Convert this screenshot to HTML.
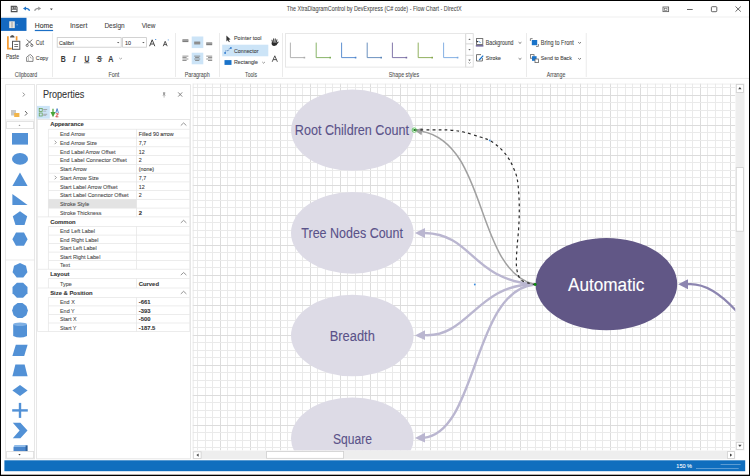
<!DOCTYPE html>
<html><head><meta charset="utf-8"><style>
html,body{margin:0;padding:0;}
body{width:750px;height:476px;position:relative;overflow:hidden;background:#fff;font-family:"Liberation Sans",sans-serif;}
.t{position:absolute;white-space:nowrap;line-height:1;transform-origin:0 0;}
.a{position:absolute;}
svg{position:absolute;left:0;top:0;}
</style></head><body>
<svg width="750" height="476" viewBox="0 0 750 476"><rect x="0" y="0" width="750" height="476" fill="#000"/><rect x="1" y="1" width="748" height="473.7" fill="#fff"/><rect x="1" y="16.6" width="748" height="0.8" fill="#ececec"/><path d="M11.3,6.4 L16.2,6.4 L17,7.2 L17,11.6 L11.3,11.6 Z" fill="#fff" stroke="#505050" stroke-width="1.1"/><rect x="12.4" y="9.9" width="3.6" height="1.1" fill="#fff"/><rect x="12.5" y="6.6" width="3.4" height="2.4" fill="#6a6a6a"/><rect x="14.4" y="6.9" width="0.8" height="1.6" fill="#ccc"/><rect x="11.8" y="9.2" width="4.8" height="0.7" fill="#505050"/><path d="M23,8.6 L26,6.6 L26,10.4 Z" fill="#1e73c8"/><path d="M25.5,8.4 Q28.5,8.2 29.6,10.8" fill="none" stroke="#1e73c8" stroke-width="1.3"/><path d="M41.2,8.6 L38.2,6.6 L38.2,10.4 Z" fill="#9a9a9a"/><path d="M38.7,8.4 Q35.7,8.2 34.6,10.8" fill="none" stroke="#9a9a9a" stroke-width="1.3"/><path d="M50,8.6 L52.8,8.6 L51.4,10.2 Z" fill="#444"/><rect x="663" y="7" width="5.6" height="4.6" fill="none" stroke="#666" stroke-width="0.9"/><rect x="664.6" y="8.3" width="2.4" height="2" fill="none" stroke="#666" stroke-width="0.6"/><rect x="687" y="9" width="5.7" height="0.9" fill="#555"/><rect x="711.4" y="6.7" width="5.4" height="5" rx="0.8" fill="none" stroke="#555" stroke-width="0.9"/><path d="M735.5,6.5 L740.8,11.6 M740.8,6.5 L735.5,11.6" stroke="#555" stroke-width="0.9"/><rect x="1" y="17.8" width="25.5" height="13.1" fill="#1469c1"/><rect x="9.2" y="21.3" width="5.6" height="6.8" fill="#e8e6e0"/><rect x="11.4" y="21.8" width="1.2" height="5.8" fill="#aaa"/><rect x="16.6" y="24.3" width="1" height="1" fill="#9bb8db"/><rect x="34.8" y="29.9" width="18.3" height="1.2" fill="#1b6fc6"/><rect x="1" y="77.9" width="748" height="0.9" fill="#e4e4e4"/><rect x="52.10" y="33" width="0.8" height="44" fill="#e6e6e6"/><rect x="175.10" y="33" width="0.8" height="44" fill="#e6e6e6"/><rect x="219.20" y="33" width="0.8" height="44" fill="#e6e6e6"/><rect x="282.00" y="33" width="0.8" height="44" fill="#e6e6e6"/><rect x="526.10" y="33" width="0.8" height="44" fill="#e6e6e6"/><rect x="585.80" y="33" width="0.8" height="44" fill="#e6e6e6"/><path d="M7.9,36.2 L7.9,48.6 L11.8,48.6" fill="none" stroke="#f59a30" stroke-width="1.7"/><path d="M16.6,36.2 L16.6,40.6" fill="none" stroke="#f59a30" stroke-width="1.7"/><path d="M10.0,37.4 Q10.2,35.8 11.4,35.6 Q12.2,34.6 13.2,35.6 Q14.4,35.8 14.6,37.4 Z" fill="#505050"/><rect x="12.5" y="41.3" width="7.3" height="8" fill="#fff" stroke="#555" stroke-width="1"/><rect x="14.3" y="44" width="3.8" height="0.8" fill="#555"/><rect x="14.3" y="46" width="3.8" height="0.8" fill="#555"/><path d="M26.6,39.6 L32.4,44.6 M32.4,39.6 L26.6,44.6" stroke="#555" stroke-width="0.8"/><circle cx="27.2" cy="45.4" r="1.1" fill="none" stroke="#555" stroke-width="0.8"/><circle cx="31.8" cy="45.4" r="1.1" fill="none" stroke="#555" stroke-width="0.8"/><path d="M26.6,57.2 L28.6,55.6 L28.6,61.4 L26.6,61.4 Z" fill="#fff" stroke="#555" stroke-width="0.7"/><path d="M28.4,55.4 L30.6,54.6 L33,57 L33,61.4 L28.6,61.4" fill="#fff" stroke="#555" stroke-width="0.7"/><path d="M30.2,56.6 L31.2,58.4" stroke="#555" stroke-width="0.6"/><rect x="57.2" y="37.6" width="64" height="9.6" fill="#fff" stroke="#c8c8c8" stroke-width="0.8"/><rect x="122.6" y="37.6" width="23.8" height="9.6" fill="#fff" stroke="#c8c8c8" stroke-width="0.8"/><path d="M117,42.1 L119.4,42.1 L118.2,43.3 Z" fill="#555"/><path d="M142.2,42.1 L144.6,42.1 L143.4,43.3 Z" fill="#555"/><path d="M149.6,46.2 L152.2,39.8 L154.8,46.2 M150.7,44 L153.7,44" fill="none" stroke="#444" stroke-width="1"/><rect x="155.2" y="39" width="1" height="1" fill="#3b86d6"/><path d="M163.2,46.2 L165.2,41.3 L167.2,46.2 M164,44.6 L166.4,44.6" fill="none" stroke="#444" stroke-width="0.9"/><rect x="167.8" y="39.5" width="0.9" height="0.9" fill="#3b86d6"/><rect x="191.7" y="36.5" width="11.6" height="11.6" fill="#cce4f7"/><rect x="191.7" y="52.7" width="11.6" height="11.6" fill="#cce4f7"/><rect x="182.4" y="39.3" width="6" height="2.8" fill="#7d7d7d"/><rect x="182.4" y="40.5" width="6" height="0.45" fill="#c8c8c8"/><rect x="194.2" y="41.6" width="6" height="2.8" fill="#7d7d7d"/><rect x="194.2" y="42.8" width="6" height="0.45" fill="#c8c8c8"/><rect x="206.2" y="42.4" width="6" height="2.8" fill="#7d7d7d"/><rect x="206.2" y="43.6" width="6" height="0.45" fill="#c8c8c8"/><rect x="182.4" y="55.70" width="6" height="0.8" fill="#7a7a7a"/><rect x="194.20" y="55.70" width="6" height="0.8" fill="#7a7a7a"/><rect x="206.20" y="55.70" width="6" height="0.8" fill="#7a7a7a"/><rect x="182.4" y="57.15" width="4.2" height="0.8" fill="#7a7a7a"/><rect x="195.10" y="57.15" width="4.2" height="0.8" fill="#7a7a7a"/><rect x="208.00" y="57.15" width="4.2" height="0.8" fill="#7a7a7a"/><rect x="182.4" y="58.60" width="6" height="0.8" fill="#7a7a7a"/><rect x="194.20" y="58.60" width="6" height="0.8" fill="#7a7a7a"/><rect x="206.20" y="58.60" width="6" height="0.8" fill="#7a7a7a"/><rect x="182.4" y="60.05" width="4.2" height="0.8" fill="#7a7a7a"/><rect x="195.10" y="60.05" width="4.2" height="0.8" fill="#7a7a7a"/><rect x="208.00" y="60.05" width="4.2" height="0.8" fill="#7a7a7a"/><rect x="84.2" y="62.4" width="5.2" height="0.8" fill="#555"/><rect x="96.4" y="58.2" width="6" height="0.7" fill="#555"/><path d="M119.2,57.9 L120.6,59.1 L122,57.9" fill="none" stroke="#888" stroke-width="0.7"/><path d="M226.4,35.6 L226.4,41.6 L227.8,40.2 L229,42.2 L229.8,41.8 L228.7,39.8 L230.6,39.6 Z" fill="#333"/><rect x="222.2" y="44.7" width="46.1" height="11.6" fill="#cce4f7"/><path d="M225.2,52.6 L225.6,50.8 L228.6,50.6 L229.2,48.6 L230.6,48.4" fill="none" stroke="#3a6aa8" stroke-width="0.7" stroke-dasharray="1 0.6"/><circle cx="225.1" cy="53.0" r="0.9" fill="#2a78d0"/><circle cx="230.9" cy="48.0" r="0.9" fill="#2a78d0"/><rect x="224.5" y="60.1" width="7" height="4.8" fill="#1a73c9"/><path d="M262.3,62 L263.6,63.2 L264.9,62" fill="none" stroke="#666" stroke-width="0.7"/><path d="M272.6,42.6 L272,40.2 M273.8,41.8 L273.6,38.9 M275.1,41.8 L275.3,38.9 M276.4,42.2 L276.9,39.8" stroke="#2b2b2b" stroke-width="0.95" stroke-linecap="round"/><path d="M271.6,42.4 Q271.2,45.6 274.2,46 Q277,46 277.6,43.6 L278.8,41.9 Q278.2,41.2 277.3,42.2 L276.8,42.6 L272.4,42.2 Z" fill="#2b2b2b"/><path d="M272.2,61.8 L274.8,55.8 L277.4,61.8 M273.2,59.6 L276.4,59.6" fill="none" stroke="#444" stroke-width="0.9"/><rect x="285.4" y="33.6" width="180" height="33.5" fill="#fff" stroke="#e2e2e2" stroke-width="0.8"/><path d="M290.4,42.6 L290.4,57.6 L304.8,57.6" fill="none" stroke="#aaaaaa" stroke-width="0.9"/><rect x="303.6" y="56.8" width="1.6" height="1.6" fill="#aaaaaa"/><path d="M316.2,42.6 L316.2,57.6 L330.6,57.6" fill="none" stroke="#7cac58" stroke-width="0.9"/><rect x="329.4" y="56.8" width="1.6" height="1.6" fill="#7cac58"/><path d="M341.6,42.6 L341.6,57.6 L356.0,57.6" fill="none" stroke="#4d84cc" stroke-width="0.9"/><rect x="354.8" y="56.8" width="1.6" height="1.6" fill="#4d84cc"/><path d="M367.2,42.6 L367.2,57.6 L381.6,57.6" fill="none" stroke="#5b86b8" stroke-width="0.9"/><rect x="380.4" y="56.8" width="1.6" height="1.6" fill="#5b86b8"/><path d="M392.4,42.6 L392.4,57.6 L406.8,57.6" fill="none" stroke="#7468a0" stroke-width="0.9"/><rect x="405.6" y="56.8" width="1.6" height="1.6" fill="#7468a0"/><path d="M418.2,42.6 L418.2,57.6 L432.6,57.6" fill="none" stroke="#86a84e" stroke-width="0.9"/><rect x="431.4" y="56.8" width="1.6" height="1.6" fill="#86a84e"/><path d="M443.6,42.6 L443.6,57.6 L458.0,57.6" fill="none" stroke="#78a8e0" stroke-width="0.9"/><rect x="456.8" y="56.8" width="1.6" height="1.6" fill="#78a8e0"/><rect x="465.8" y="33.6" width="7.4" height="10.4" fill="#fff" stroke="#d6d6d6" stroke-width="0.8"/><rect x="465.8" y="44" width="7.4" height="11.3" fill="#fff" stroke="#d6d6d6" stroke-width="0.8"/><rect x="465.8" y="55.3" width="7.4" height="11.8" fill="#fff" stroke="#d6d6d6" stroke-width="0.8"/><path d="M468.3,40 L470.7,40 L469.5,38.5 Z" fill="#666"/><path d="M468.3,48.9 L470.7,48.9 L469.5,50.4 Z" fill="#666"/><path d="M468.3,59.6 L470.7,59.6 L469.5,61.2 Z" fill="#666"/><path d="M468.3,62.4 L469.5,63.4 L470.7,62.4" fill="none" stroke="#777" stroke-width="0.6"/><rect x="476.5" y="38.6" width="6.3" height="5.8" fill="#fff" stroke="#555" stroke-width="0.8"/><path d="M476,40.4 L478.6,41.6 L477.2,42.4 Z" fill="#222"/><path d="M478.6,41.4 L480.6,42.6" stroke="#3a86d4" stroke-width="0.9"/><rect x="475.8" y="45.2" width="7.6" height="1.3" fill="#564a86"/><path d="M481,54.6 L476.5,54.6 L476.5,61 L482.4,61 L482.4,58" fill="none" stroke="#555" stroke-width="0.8"/><path d="M479.2,60 L483.2,55.6" stroke="#1a73c9" stroke-width="1.2"/><path d="M518.6,42.2 L520.0,43.4 L521.4,42.2" fill="none" stroke="#555" stroke-width="0.8"/><path d="M518.6,58.2 L520.0,59.4 L521.4,58.2" fill="none" stroke="#555" stroke-width="0.8"/><path d="M578.2,42.2 L579.6,43.4 L581.0,42.2" fill="none" stroke="#555" stroke-width="0.8"/><path d="M578.2,58.2 L579.6,59.4 L581.0,58.2" fill="none" stroke="#555" stroke-width="0.8"/><path d="M530.4,41 L530.4,38.6 L532.6,38.6" fill="none" stroke="#666" stroke-width="0.8"/><path d="M538.4,44 L538.4,46.4 L536,46.4" fill="none" stroke="#666" stroke-width="0.8"/><rect x="531.8" y="40" width="5.4" height="5.2" fill="#1a73c9"/><rect x="530.4" y="54.6" width="3.6" height="3.6" fill="#fff" stroke="#666" stroke-width="0.8"/><rect x="532" y="56.2" width="4.6" height="4.6" fill="#1a73c9"/><rect x="535" y="59" width="3.6" height="3.6" fill="#fff" stroke="#666" stroke-width="0.8"/><rect x="5.6" y="84.6" width="29" height="374.2" fill="#fff" stroke="#e2e2e2" stroke-width="0.8"/><path d="M22.8,92.6 L24.6,94.6 L22.8,96.6" fill="none" stroke="#777" stroke-width="0.8"/><rect x="11" y="110" width="5" height="5.5" fill="#c9c9c9"/><rect x="14.2" y="113" width="5.2" height="4" fill="#f2b54a"/><path d="M25,111 L27.2,113.3 L25,115.6" fill="none" stroke="#555" stroke-width="0.9"/><rect x="5.6" y="119.6" width="29" height="0.8" fill="#e6e6e6"/><rect x="6.6" y="121.6" width="27" height="7" fill="#fff" stroke="#dcdcdc" stroke-width="0.8"/><path d="M18.5,125.9 L20.5,125.9 L19.5,124.6 Z" fill="#999"/><rect x="12" y="133" width="16" height="11.6" fill="#5291d6"/><ellipse cx="20" cy="158.9" rx="8" ry="5.9" fill="#5291d6"/><path d="M20,172.6 L27.6,186 L12.4,186 Z" fill="#5291d6"/><path d="M12.4,193.9 L27.6,204.9 L12.4,204.9 Z" fill="#5291d6"/><path d="M20,211.3 L27.2,216.3 L24.5,224.9 L15.5,224.9 L12.8,216.3 Z" fill="#5291d6"/><path d="M16,232.5 L24,232.5 L27.6,239.2 L24,245.8 L16,245.8 L12.4,239.2 Z" fill="#5291d6"/><rect x="5.6" y="259.6" width="29" height="0.8" fill="#e6e6e6"/><polygon points="20.00,263.00 25.94,265.86 27.41,272.29 23.30,277.45 16.70,277.45 12.59,272.29 14.06,265.86" fill="#5291d6"/><polygon points="27.48,293.30 23.10,297.68 16.90,297.68 12.52,293.30 12.52,287.10 16.90,282.72 23.10,282.72 27.48,287.10" fill="#5291d6"/><polygon points="27.90,310.60 26.39,315.24 22.44,318.11 17.56,318.11 13.61,315.24 12.10,310.60 13.61,305.96 17.56,303.09 22.44,303.09 26.39,305.96" fill="#5291d6"/><path d="M13.2,324.5 L13.2,336 Q20.1,339 27,336 L27,324.5 Z" fill="#5291d6"/><ellipse cx="20.1" cy="324.3" rx="6.9" ry="1.8" fill="#7fb0e4"/><path d="M15.8,344.8 L27.6,344.8 L24.2,356.1 L12.4,356.1 Z" fill="#5291d6"/><path d="M15.4,364.5 L24.6,364.5 L27.6,376.3 L12.4,376.3 Z" fill="#5291d6"/><path d="M20,385.1 L27.6,390.5 L20,396 L12.4,390.5 Z" fill="#5291d6"/><rect x="18.8" y="402.9" width="2.4" height="15" fill="#5291d6"/><rect x="12.2" y="409.2" width="15.6" height="2.4" fill="#5291d6"/><path d="M12.8,422.8 L20.4,422.8 L27.5,430.5 L20.4,438.3 L12.8,438.3 L19.6,430.5 Z" fill="#5291d6"/><path d="M13.5,447 L26.5,447 L26.5,451.5 L13.5,451.5 Z" fill="#4a86cc"/><path d="M14.5,445 L27.7,445 L26.5,447 L13.5,447 Z" fill="#8fbbe9"/><rect x="25.6" y="445.5" width="2" height="6" fill="#2e5f99"/><rect x="6.6" y="451.4" width="27" height="6.8" fill="#fff" stroke="#dcdcdc" stroke-width="0.8"/><path d="M18.3,453.9 L20.7,453.9 L19.5,455.5 Z" fill="#444"/><rect x="36.6" y="84.6" width="153.8" height="374.2" fill="#fff" stroke="#e2e2e2" stroke-width="0.8"/><path d="M162.9,92.3 L165.3,92.3 L165.0,94.8 L166.0,95.6 L162.2,95.6 L163.2,94.8 Z" fill="#a0a0a0"/><path d="M164.1,95.6 L164.1,97.6" stroke="#a0a0a0" stroke-width="0.7"/><path d="M178.2,92.4 L182.2,96.6 M182.2,92.4 L178.2,96.6" stroke="#777" stroke-width="0.9"/><rect x="37" y="105.9" width="12.8" height="12.8" fill="#cce4f7"/><rect x="39.2" y="108.4" width="3" height="3" fill="none" stroke="#5c9a48" stroke-width="0.7"/><rect x="39.2" y="113" width="3" height="3" fill="none" stroke="#5c9a48" stroke-width="0.7"/><rect x="43.2" y="109.2" width="4" height="0.8" fill="#999"/><rect x="43.2" y="110.8" width="3" height="0.6" fill="#999"/><rect x="43.2" y="113.8" width="4" height="0.8" fill="#999"/><rect x="43.2" y="115.4" width="3" height="0.6" fill="#999"/><path d="M53,108.8 L53,114 M51.4,112.6 L53,115.8 L54.6,112.6 Z" fill="#4aa43a" stroke="#4aa43a" stroke-width="1.2"/><path d="M55.8,113 L57.1,108.6 L58.4,113" fill="none" stroke="#2f6fc0" stroke-width="0.8"/><path d="M55.8,113.8 L58.4,113.8 L55.8,116.8 L58.4,116.8" fill="none" stroke="#d03a3a" stroke-width="0.9"/><rect x="37" y="119.0" width="153.2" height="0.8" fill="#e0e0e0"/><path d="M180.8,125.55 L183.6,122.95 L186.4,125.55" fill="none" stroke="#7a7a7a" stroke-width="0.8"/><rect x="47.949999999999996" y="129.20" width="0.7" height="8.80" fill="#e4e4e4"/><rect x="136.25" y="129.20" width="0.7" height="8.80" fill="#e4e4e4"/><rect x="48.3" y="128.85" width="141.50" height="0.7" fill="#e4e4e4"/><rect x="47.949999999999996" y="138.00" width="0.7" height="8.80" fill="#e4e4e4"/><rect x="136.25" y="138.00" width="0.7" height="8.80" fill="#e4e4e4"/><path d="M54.6,140.60 L56.4,142.40 L54.6,144.20" fill="none" stroke="#777" stroke-width="0.7"/><rect x="48.3" y="137.65" width="141.50" height="0.7" fill="#e4e4e4"/><rect x="47.949999999999996" y="146.80" width="0.7" height="8.80" fill="#e4e4e4"/><rect x="136.25" y="146.80" width="0.7" height="8.80" fill="#e4e4e4"/><rect x="48.3" y="146.45" width="141.50" height="0.7" fill="#e4e4e4"/><rect x="47.949999999999996" y="155.60" width="0.7" height="8.80" fill="#e4e4e4"/><rect x="136.25" y="155.60" width="0.7" height="8.80" fill="#e4e4e4"/><rect x="48.3" y="155.25" width="141.50" height="0.7" fill="#e4e4e4"/><rect x="47.949999999999996" y="164.40" width="0.7" height="8.80" fill="#e4e4e4"/><rect x="136.25" y="164.40" width="0.7" height="8.80" fill="#e4e4e4"/><rect x="48.3" y="164.05" width="141.50" height="0.7" fill="#e4e4e4"/><rect x="47.949999999999996" y="173.20" width="0.7" height="8.70" fill="#e4e4e4"/><rect x="136.25" y="173.20" width="0.7" height="8.70" fill="#e4e4e4"/><path d="M54.6,175.75 L56.4,177.55 L54.6,179.35" fill="none" stroke="#777" stroke-width="0.7"/><rect x="48.3" y="172.85" width="141.50" height="0.7" fill="#e4e4e4"/><rect x="47.949999999999996" y="181.90" width="0.7" height="8.70" fill="#e4e4e4"/><rect x="136.25" y="181.90" width="0.7" height="8.70" fill="#e4e4e4"/><rect x="48.3" y="181.55" width="141.50" height="0.7" fill="#e4e4e4"/><rect x="47.949999999999996" y="190.60" width="0.7" height="8.70" fill="#e4e4e4"/><rect x="136.25" y="190.60" width="0.7" height="8.70" fill="#e4e4e4"/><rect x="48.3" y="190.25" width="141.50" height="0.7" fill="#e4e4e4"/><rect x="48.3" y="199.30" width="88.30" height="8.80" fill="#e3e3e3"/><rect x="47.949999999999996" y="199.30" width="0.7" height="8.80" fill="#e4e4e4"/><rect x="136.25" y="199.30" width="0.7" height="8.80" fill="#e4e4e4"/><rect x="48.3" y="198.95" width="141.50" height="0.7" fill="#e4e4e4"/><rect x="47.949999999999996" y="208.10" width="0.7" height="8.80" fill="#e4e4e4"/><rect x="136.25" y="208.10" width="0.7" height="8.80" fill="#e4e4e4"/><rect x="48.3" y="207.75" width="141.50" height="0.7" fill="#e4e4e4"/><path d="M180.8,222.90 L183.6,220.30 L186.4,222.90" fill="none" stroke="#7a7a7a" stroke-width="0.8"/><rect x="37.5" y="216.55" width="152.30" height="0.7" fill="#e4e4e4"/><rect x="47.949999999999996" y="226.50" width="0.7" height="8.60" fill="#e4e4e4"/><rect x="136.25" y="226.50" width="0.7" height="8.60" fill="#e4e4e4"/><rect x="48.3" y="226.15" width="141.50" height="0.7" fill="#e4e4e4"/><rect x="47.949999999999996" y="235.10" width="0.7" height="8.50" fill="#e4e4e4"/><rect x="136.25" y="235.10" width="0.7" height="8.50" fill="#e4e4e4"/><rect x="48.3" y="234.75" width="141.50" height="0.7" fill="#e4e4e4"/><rect x="47.949999999999996" y="243.60" width="0.7" height="8.50" fill="#e4e4e4"/><rect x="136.25" y="243.60" width="0.7" height="8.50" fill="#e4e4e4"/><rect x="48.3" y="243.25" width="141.50" height="0.7" fill="#e4e4e4"/><rect x="47.949999999999996" y="252.10" width="0.7" height="8.50" fill="#e4e4e4"/><rect x="136.25" y="252.10" width="0.7" height="8.50" fill="#e4e4e4"/><rect x="48.3" y="251.75" width="141.50" height="0.7" fill="#e4e4e4"/><rect x="47.949999999999996" y="260.60" width="0.7" height="8.60" fill="#e4e4e4"/><rect x="136.25" y="260.60" width="0.7" height="8.60" fill="#e4e4e4"/><rect x="48.3" y="260.25" width="141.50" height="0.7" fill="#e4e4e4"/><path d="M180.8,275.10 L183.6,272.50 L186.4,275.10" fill="none" stroke="#7a7a7a" stroke-width="0.8"/><rect x="37.5" y="268.85" width="152.30" height="0.7" fill="#e4e4e4"/><rect x="47.949999999999996" y="278.60" width="0.7" height="9.40" fill="#e4e4e4"/><rect x="136.25" y="278.60" width="0.7" height="9.40" fill="#e4e4e4"/><rect x="48.3" y="278.25" width="141.50" height="0.7" fill="#e4e4e4"/><path d="M180.8,293.90 L183.6,291.30 L186.4,293.90" fill="none" stroke="#7a7a7a" stroke-width="0.8"/><rect x="37.5" y="287.65" width="152.30" height="0.7" fill="#e4e4e4"/><rect x="47.949999999999996" y="297.40" width="0.7" height="8.50" fill="#e4e4e4"/><rect x="136.25" y="297.40" width="0.7" height="8.50" fill="#e4e4e4"/><rect x="48.3" y="297.05" width="141.50" height="0.7" fill="#e4e4e4"/><rect x="47.949999999999996" y="305.90" width="0.7" height="8.60" fill="#e4e4e4"/><rect x="136.25" y="305.90" width="0.7" height="8.60" fill="#e4e4e4"/><rect x="48.3" y="305.55" width="141.50" height="0.7" fill="#e4e4e4"/><rect x="47.949999999999996" y="314.50" width="0.7" height="8.50" fill="#e4e4e4"/><rect x="136.25" y="314.50" width="0.7" height="8.50" fill="#e4e4e4"/><rect x="48.3" y="314.15" width="141.50" height="0.7" fill="#e4e4e4"/><rect x="47.949999999999996" y="323.00" width="0.7" height="8.50" fill="#e4e4e4"/><rect x="136.25" y="323.00" width="0.7" height="8.50" fill="#e4e4e4"/><rect x="48.3" y="322.65" width="141.50" height="0.7" fill="#e4e4e4"/><rect x="37.5" y="331.15" width="152.30" height="0.7" fill="#e4e4e4"/><rect x="37.15" y="119.5" width="0.7" height="212.00" fill="#e4e4e4"/><rect x="189.45000000000002" y="119.5" width="0.7" height="212.00" fill="#e4e4e4"/><rect x="192.5" y="83.4" width="543.0" height="367.2" fill="#fff"/><svg x="192.5" y="83.4" width="543.0" height="367.2" viewBox="192.5 83.4 543.0 367.2" style="position:static"><rect x="197" y="83.4" width="1" height="367.2" fill="#eaeaea"/><rect x="205" y="83.4" width="1" height="367.2" fill="#eaeaea"/><rect x="212" y="83.4" width="1" height="367.2" fill="#eaeaea"/><rect x="220" y="83.4" width="1" height="367.2" fill="#dcdcdc"/><rect x="227" y="83.4" width="1" height="367.2" fill="#eaeaea"/><rect x="235" y="83.4" width="1" height="367.2" fill="#eaeaea"/><rect x="242" y="83.4" width="1" height="367.2" fill="#eaeaea"/><rect x="250" y="83.4" width="1" height="367.2" fill="#dcdcdc"/><rect x="257" y="83.4" width="1" height="367.2" fill="#eaeaea"/><rect x="265" y="83.4" width="1" height="367.2" fill="#eaeaea"/><rect x="272" y="83.4" width="1" height="367.2" fill="#eaeaea"/><rect x="280" y="83.4" width="1" height="367.2" fill="#dcdcdc"/><rect x="287" y="83.4" width="1" height="367.2" fill="#eaeaea"/><rect x="295" y="83.4" width="1" height="367.2" fill="#eaeaea"/><rect x="302" y="83.4" width="1" height="367.2" fill="#eaeaea"/><rect x="310" y="83.4" width="1" height="367.2" fill="#dcdcdc"/><rect x="317" y="83.4" width="1" height="367.2" fill="#eaeaea"/><rect x="325" y="83.4" width="1" height="367.2" fill="#eaeaea"/><rect x="332" y="83.4" width="1" height="367.2" fill="#eaeaea"/><rect x="340" y="83.4" width="1" height="367.2" fill="#dcdcdc"/><rect x="347" y="83.4" width="1" height="367.2" fill="#eaeaea"/><rect x="355" y="83.4" width="1" height="367.2" fill="#eaeaea"/><rect x="362" y="83.4" width="1" height="367.2" fill="#eaeaea"/><rect x="370" y="83.4" width="1" height="367.2" fill="#dcdcdc"/><rect x="377" y="83.4" width="1" height="367.2" fill="#eaeaea"/><rect x="385" y="83.4" width="1" height="367.2" fill="#eaeaea"/><rect x="392" y="83.4" width="1" height="367.2" fill="#eaeaea"/><rect x="400" y="83.4" width="1" height="367.2" fill="#dcdcdc"/><rect x="407" y="83.4" width="1" height="367.2" fill="#eaeaea"/><rect x="415" y="83.4" width="1" height="367.2" fill="#eaeaea"/><rect x="422" y="83.4" width="1" height="367.2" fill="#eaeaea"/><rect x="430" y="83.4" width="1" height="367.2" fill="#dcdcdc"/><rect x="437" y="83.4" width="1" height="367.2" fill="#eaeaea"/><rect x="445" y="83.4" width="1" height="367.2" fill="#eaeaea"/><rect x="452" y="83.4" width="1" height="367.2" fill="#eaeaea"/><rect x="460" y="83.4" width="1" height="367.2" fill="#dcdcdc"/><rect x="467" y="83.4" width="1" height="367.2" fill="#eaeaea"/><rect x="475" y="83.4" width="1" height="367.2" fill="#eaeaea"/><rect x="482" y="83.4" width="1" height="367.2" fill="#eaeaea"/><rect x="490" y="83.4" width="1" height="367.2" fill="#dcdcdc"/><rect x="497" y="83.4" width="1" height="367.2" fill="#eaeaea"/><rect x="505" y="83.4" width="1" height="367.2" fill="#eaeaea"/><rect x="512" y="83.4" width="1" height="367.2" fill="#eaeaea"/><rect x="520" y="83.4" width="1" height="367.2" fill="#dcdcdc"/><rect x="527" y="83.4" width="1" height="367.2" fill="#eaeaea"/><rect x="535" y="83.4" width="1" height="367.2" fill="#eaeaea"/><rect x="542" y="83.4" width="1" height="367.2" fill="#eaeaea"/><rect x="550" y="83.4" width="1" height="367.2" fill="#dcdcdc"/><rect x="557" y="83.4" width="1" height="367.2" fill="#eaeaea"/><rect x="565" y="83.4" width="1" height="367.2" fill="#eaeaea"/><rect x="572" y="83.4" width="1" height="367.2" fill="#eaeaea"/><rect x="580" y="83.4" width="1" height="367.2" fill="#dcdcdc"/><rect x="587" y="83.4" width="1" height="367.2" fill="#eaeaea"/><rect x="595" y="83.4" width="1" height="367.2" fill="#eaeaea"/><rect x="602" y="83.4" width="1" height="367.2" fill="#eaeaea"/><rect x="610" y="83.4" width="1" height="367.2" fill="#dcdcdc"/><rect x="617" y="83.4" width="1" height="367.2" fill="#eaeaea"/><rect x="625" y="83.4" width="1" height="367.2" fill="#eaeaea"/><rect x="632" y="83.4" width="1" height="367.2" fill="#eaeaea"/><rect x="640" y="83.4" width="1" height="367.2" fill="#dcdcdc"/><rect x="647" y="83.4" width="1" height="367.2" fill="#eaeaea"/><rect x="655" y="83.4" width="1" height="367.2" fill="#eaeaea"/><rect x="662" y="83.4" width="1" height="367.2" fill="#eaeaea"/><rect x="670" y="83.4" width="1" height="367.2" fill="#dcdcdc"/><rect x="677" y="83.4" width="1" height="367.2" fill="#eaeaea"/><rect x="685" y="83.4" width="1" height="367.2" fill="#eaeaea"/><rect x="692" y="83.4" width="1" height="367.2" fill="#eaeaea"/><rect x="700" y="83.4" width="1" height="367.2" fill="#dcdcdc"/><rect x="707" y="83.4" width="1" height="367.2" fill="#eaeaea"/><rect x="715" y="83.4" width="1" height="367.2" fill="#eaeaea"/><rect x="722" y="83.4" width="1" height="367.2" fill="#eaeaea"/><rect x="730" y="83.4" width="1" height="367.2" fill="#dcdcdc"/><rect x="192.5" y="87" width="543.0" height="1" fill="#eaeaea"/><rect x="192.5" y="95" width="543.0" height="1" fill="#dcdcdc"/><rect x="192.5" y="102" width="543.0" height="1" fill="#eaeaea"/><rect x="192.5" y="110" width="543.0" height="1" fill="#eaeaea"/><rect x="192.5" y="117" width="543.0" height="1" fill="#eaeaea"/><rect x="192.5" y="125" width="543.0" height="1" fill="#dcdcdc"/><rect x="192.5" y="132" width="543.0" height="1" fill="#eaeaea"/><rect x="192.5" y="140" width="543.0" height="1" fill="#eaeaea"/><rect x="192.5" y="147" width="543.0" height="1" fill="#eaeaea"/><rect x="192.5" y="155" width="543.0" height="1" fill="#dcdcdc"/><rect x="192.5" y="162" width="543.0" height="1" fill="#eaeaea"/><rect x="192.5" y="170" width="543.0" height="1" fill="#eaeaea"/><rect x="192.5" y="177" width="543.0" height="1" fill="#eaeaea"/><rect x="192.5" y="185" width="543.0" height="1" fill="#dcdcdc"/><rect x="192.5" y="192" width="543.0" height="1" fill="#eaeaea"/><rect x="192.5" y="200" width="543.0" height="1" fill="#eaeaea"/><rect x="192.5" y="207" width="543.0" height="1" fill="#eaeaea"/><rect x="192.5" y="215" width="543.0" height="1" fill="#dcdcdc"/><rect x="192.5" y="222" width="543.0" height="1" fill="#eaeaea"/><rect x="192.5" y="230" width="543.0" height="1" fill="#eaeaea"/><rect x="192.5" y="237" width="543.0" height="1" fill="#eaeaea"/><rect x="192.5" y="245" width="543.0" height="1" fill="#dcdcdc"/><rect x="192.5" y="252" width="543.0" height="1" fill="#eaeaea"/><rect x="192.5" y="260" width="543.0" height="1" fill="#eaeaea"/><rect x="192.5" y="267" width="543.0" height="1" fill="#eaeaea"/><rect x="192.5" y="275" width="543.0" height="1" fill="#dcdcdc"/><rect x="192.5" y="282" width="543.0" height="1" fill="#eaeaea"/><rect x="192.5" y="290" width="543.0" height="1" fill="#eaeaea"/><rect x="192.5" y="297" width="543.0" height="1" fill="#eaeaea"/><rect x="192.5" y="305" width="543.0" height="1" fill="#dcdcdc"/><rect x="192.5" y="312" width="543.0" height="1" fill="#eaeaea"/><rect x="192.5" y="320" width="543.0" height="1" fill="#eaeaea"/><rect x="192.5" y="327" width="543.0" height="1" fill="#eaeaea"/><rect x="192.5" y="335" width="543.0" height="1" fill="#dcdcdc"/><rect x="192.5" y="342" width="543.0" height="1" fill="#eaeaea"/><rect x="192.5" y="350" width="543.0" height="1" fill="#eaeaea"/><rect x="192.5" y="357" width="543.0" height="1" fill="#eaeaea"/><rect x="192.5" y="365" width="543.0" height="1" fill="#dcdcdc"/><rect x="192.5" y="372" width="543.0" height="1" fill="#eaeaea"/><rect x="192.5" y="380" width="543.0" height="1" fill="#eaeaea"/><rect x="192.5" y="387" width="543.0" height="1" fill="#eaeaea"/><rect x="192.5" y="395" width="543.0" height="1" fill="#dcdcdc"/><rect x="192.5" y="402" width="543.0" height="1" fill="#eaeaea"/><rect x="192.5" y="410" width="543.0" height="1" fill="#eaeaea"/><rect x="192.5" y="417" width="543.0" height="1" fill="#eaeaea"/><rect x="192.5" y="425" width="543.0" height="1" fill="#dcdcdc"/><rect x="192.5" y="432" width="543.0" height="1" fill="#eaeaea"/><rect x="192.5" y="440" width="543.0" height="1" fill="#eaeaea"/><rect x="192.5" y="447" width="543.0" height="1" fill="#eaeaea"/><rect x="192.5" y="83.4" width="1" height="367.2" fill="#e2e2e2"/><rect x="192.5" y="83.4" width="543" height="1" fill="#e6e6e6"/><ellipse cx="352.3" cy="130.2" rx="61.2" ry="40.6" fill="#dddbe6"/><ellipse cx="352.3" cy="232.9" rx="61.3" ry="40.8" fill="#dddbe6"/><ellipse cx="352.3" cy="335.5" rx="61.3" ry="40.8" fill="#dddbe6"/><ellipse cx="352.3" cy="438.3" rx="61.3" ry="40.8" fill="#dddbe6"/><ellipse cx="606.4" cy="284.1" rx="70.8" ry="46.2" fill="#615786"/><path d="M534.60,284.50 C470.37,278.91 473.74,234.52 424.80,233.00" fill="none" stroke="#bab6d0" stroke-width="2.35"/><path d="M534.60,284.50 C477.64,283.58 468.25,337.43 424.80,335.20" fill="none" stroke="#bab6d0" stroke-width="2.35"/><path d="M534.60,284.50 C472.53,290.29 477.97,432.64 423.40,437.90" fill="none" stroke="#bab6d0" stroke-width="2.35"/><path d="M414.9,233.0 L425.0,228.10 L425.0,237.90 Z" fill="#bab6d0"/><path d="M414.9,335.5 L425.0,330.30 L425.0,340.10 Z" fill="#bab6d0"/><path d="M414.9,437.9 L425.0,432.70 L425.0,442.50 Z" fill="#bab6d0"/><path d="M688.00,284.20 C716.35,281.94 742.88,320.27 735.40,309.40" fill="none" stroke="#8c85b0" stroke-width="2.3"/><path d="M678.2,284.2 L688.0,279.2 L688.0,289.3 Z" fill="#8c85b0"/><path d="M534.60,284.50 C474.50,269.65 488.67,143.68 421.50,131.20" fill="none" stroke="#a0a0a0" stroke-width="1.5"/><path d="M414.3,130.1 L422.86,127.83 L421.47,135.30 Z" fill="#a0a0a0"/><path d="M414.50,130.00 C418.68,129.97 433.42,129.75 439.60,129.80 C445.78,129.85 447.60,129.93 451.60,130.30 C455.60,130.67 458.85,130.88 463.60,132.00 C468.35,133.12 475.67,135.57 480.10,137.00 C484.53,138.43 486.83,138.72 490.20,140.60 C493.57,142.48 497.37,145.53 500.30,148.30 C503.23,151.07 505.70,154.15 507.80,157.20 C509.90,160.25 511.30,162.80 512.90,166.60 C514.50,170.40 516.35,173.92 517.40,180.00 C518.45,186.08 518.97,195.40 519.20,203.10 C519.43,210.80 519.18,218.50 518.80,226.20 C518.42,233.90 517.27,242.37 516.90,249.30 C516.53,256.23 515.98,262.80 516.60,267.80 C517.22,272.80 518.43,276.68 520.60,279.30 C522.77,281.92 527.20,282.63 529.60,283.50 C532.00,284.37 534.10,284.33 535.00,284.50" fill="none" stroke="#2a2a2a" stroke-width="1.2" stroke-dasharray="2.8 3.2"/><circle cx="414.3" cy="130.1" r="2.2" fill="none" stroke="#5fc85f" stroke-width="0.9"/><circle cx="414.3" cy="130.1" r="1" fill="#0a8a0a"/><circle cx="535.2" cy="284.5" r="1.4" fill="#0a8a0a"/><circle cx="489.8" cy="140.4" r="0.9" fill="#3b8de0"/><circle cx="474.8" cy="284.5" r="0.9" fill="#3b8de0"/></svg><rect x="192.5" y="450.6" width="543.0" height="8.6" fill="#eeeeee"/><rect x="735.5" y="83.4" width="9" height="367.2" fill="#eeeeee"/><rect x="735.5" y="450.6" width="9.2" height="8.6" fill="#fff"/><rect x="193.5" y="451.8" width="7.6" height="6.6" fill="#fff" stroke="#cfcfcf" stroke-width="0.8"/><path d="M198.6,453.4 L198.6,456.8 L196.4,455.1 Z" fill="#444"/><rect x="727.4" y="451.6" width="7" height="6.8" fill="#fff" stroke="#cfcfcf" stroke-width="0.8"/><path d="M730,453.4 L730,456.8 L732.2,455.1 Z" fill="#444"/><rect x="266.6" y="451.5" width="77" height="6.8" fill="#fff" stroke="#cfcfcf" stroke-width="0.8"/><rect x="736.3" y="84.4" width="7.2" height="8" fill="#fff" stroke="#cfcfcf" stroke-width="0.8"/><path d="M738.2,89.2 L741.6,89.2 L739.9,87.0 Z" fill="#444"/><rect x="736.3" y="442.4" width="7.2" height="7" fill="#fff" stroke="#cfcfcf" stroke-width="0.8"/><path d="M738.2,444.8 L741.6,444.8 L739.9,447.0 Z" fill="#444"/><rect x="736.2" y="167.6" width="7.3" height="63.6" fill="#fff" stroke="#cfcfcf" stroke-width="0.8"/><rect x="4.4" y="460.3" width="740.8" height="10.9" fill="#106ebe"/><rect x="696" y="468.3" width="42.7" height="0.7" fill="#7fb0dd"/><rect x="720.6" y="464" width="20" height="0.7" fill="#7fb0dd"/></svg>
<svg width="750" height="476" viewBox="0 0 750 476" style="position:absolute;left:0;top:0"><text x="286.80" y="11" font-size="6.98" fill="#4a4a4a" font-weight="normal" font-style="normal" font-family="'Liberation Sans',sans-serif" textLength="174.70" lengthAdjust="spacingAndGlyphs" stroke="#4a4a4a" stroke-width="0.08">The XtraDiagramControl by DevExpress (C# code) - Flow Chart - DirectX</text><text x="34.80" y="28" font-size="7.99" fill="#2e2e2e" font-weight="normal" font-style="normal" font-family="'Liberation Sans',sans-serif" textLength="18.20" lengthAdjust="spacingAndGlyphs" stroke="#2e2e2e" stroke-width="0.08">Home</text><text x="69.90" y="28" font-size="7.99" fill="#444" font-weight="normal" font-style="normal" font-family="'Liberation Sans',sans-serif" textLength="17.50" lengthAdjust="spacingAndGlyphs" stroke="#444" stroke-width="0.08">Insert</text><text x="104.40" y="28" font-size="7.99" fill="#444" font-weight="normal" font-style="normal" font-family="'Liberation Sans',sans-serif" textLength="20.30" lengthAdjust="spacingAndGlyphs" stroke="#444" stroke-width="0.08">Design</text><text x="141.70" y="28" font-size="7.99" fill="#444" font-weight="normal" font-style="normal" font-family="'Liberation Sans',sans-serif" textLength="13.78" lengthAdjust="spacingAndGlyphs" stroke="#444" stroke-width="0.08">View</text><text x="14.80" y="77" font-size="6.98" fill="#505050" font-weight="normal" font-style="normal" font-family="'Liberation Sans',sans-serif" textLength="22.40" lengthAdjust="spacingAndGlyphs" stroke="#505050" stroke-width="0.08">Clipboard</text><text x="108.40" y="77" font-size="6.98" fill="#505050" font-weight="normal" font-style="normal" font-family="'Liberation Sans',sans-serif" textLength="11.00" lengthAdjust="spacingAndGlyphs" stroke="#505050" stroke-width="0.08">Font</text><text x="184.80" y="77" font-size="6.98" fill="#505050" font-weight="normal" font-style="normal" font-family="'Liberation Sans',sans-serif" textLength="25.00" lengthAdjust="spacingAndGlyphs" stroke="#505050" stroke-width="0.08">Paragraph</text><text x="245.10" y="77" font-size="6.98" fill="#505050" font-weight="normal" font-style="normal" font-family="'Liberation Sans',sans-serif" textLength="11.90" lengthAdjust="spacingAndGlyphs" stroke="#505050" stroke-width="0.08">Tools</text><text x="388.80" y="77" font-size="6.98" fill="#505050" font-weight="normal" font-style="normal" font-family="'Liberation Sans',sans-serif" textLength="30.40" lengthAdjust="spacingAndGlyphs" stroke="#505050" stroke-width="0.08">Shape styles</text><text x="546.70" y="77" font-size="6.98" fill="#505050" font-weight="normal" font-style="normal" font-family="'Liberation Sans',sans-serif" textLength="18.70" lengthAdjust="spacingAndGlyphs" stroke="#505050" stroke-width="0.08">Arrange</text><text x="5.90" y="59" font-size="6.69" fill="#404040" font-weight="normal" font-style="normal" font-family="'Liberation Sans',sans-serif" textLength="13.10" lengthAdjust="spacingAndGlyphs" stroke="#404040" stroke-width="0.08">Paste</text><text x="35.80" y="45" font-size="6.40" fill="#404040" font-weight="normal" font-style="normal" font-family="'Liberation Sans',sans-serif" textLength="8.10" lengthAdjust="spacingAndGlyphs" stroke="#404040" stroke-width="0.08">Cut</text><text x="35.80" y="60" font-size="6.25" fill="#404040" font-weight="normal" font-style="normal" font-family="'Liberation Sans',sans-serif" textLength="12.40" lengthAdjust="spacingAndGlyphs" stroke="#404040" stroke-width="0.08">Copy</text><text x="59.00" y="45" font-size="6.10" fill="#333" font-weight="normal" font-style="normal" font-family="'Liberation Sans',sans-serif" textLength="15.00" lengthAdjust="spacingAndGlyphs" stroke="#333" stroke-width="0.08">Calibri</text><text x="125.00" y="45" font-size="6.10" fill="#333" font-weight="normal" font-style="normal" font-family="'Liberation Sans',sans-serif" textLength="6.00" lengthAdjust="spacingAndGlyphs" stroke="#333" stroke-width="0.08">10</text><text x="234.00" y="40" font-size="5.96" fill="#404040" font-weight="normal" font-style="normal" font-family="'Liberation Sans',sans-serif" textLength="27.50" lengthAdjust="spacingAndGlyphs" stroke="#404040" stroke-width="0.08">Pointer tool</text><text x="234.00" y="53" font-size="6.25" fill="#404040" font-weight="normal" font-style="normal" font-family="'Liberation Sans',sans-serif" textLength="24.40" lengthAdjust="spacingAndGlyphs" stroke="#404040" stroke-width="0.08">Connector</text><text x="234.00" y="64" font-size="5.96" fill="#404040" font-weight="normal" font-style="normal" font-family="'Liberation Sans',sans-serif" textLength="24.00" lengthAdjust="spacingAndGlyphs" stroke="#404040" stroke-width="0.08">Rectangle</text><text x="485.80" y="45" font-size="6.40" fill="#404040" font-weight="normal" font-style="normal" font-family="'Liberation Sans',sans-serif" textLength="27.70" lengthAdjust="spacingAndGlyphs" stroke="#404040" stroke-width="0.08">Background</text><text x="485.80" y="60" font-size="6.25" fill="#404040" font-weight="normal" font-style="normal" font-family="'Liberation Sans',sans-serif" textLength="15.20" lengthAdjust="spacingAndGlyphs" stroke="#404040" stroke-width="0.08">Stroke</text><text x="540.80" y="45" font-size="6.40" fill="#404040" font-weight="normal" font-style="normal" font-family="'Liberation Sans',sans-serif" textLength="33.00" lengthAdjust="spacingAndGlyphs" stroke="#404040" stroke-width="0.08">Bring to Front</text><text x="540.80" y="60" font-size="6.25" fill="#404040" font-weight="normal" font-style="normal" font-family="'Liberation Sans',sans-serif" textLength="30.99" lengthAdjust="spacingAndGlyphs" stroke="#404040" stroke-width="0.08">Send to Back</text><text x="42.90" y="98" font-size="10.03" fill="#333" font-weight="normal" font-style="normal" font-family="'Liberation Sans',sans-serif" textLength="41.40" lengthAdjust="spacingAndGlyphs" stroke="#333" stroke-width="0.08">Properties</text><text x="50.20" y="126" font-size="6.10" fill="#333" font-weight="bold" font-style="normal" font-family="'Liberation Sans',sans-serif" textLength="33.60" lengthAdjust="spacingAndGlyphs" stroke="#333" stroke-width="0.08">Appearance</text><text x="60.00" y="136" font-size="5.96" fill="#484848" font-weight="normal" font-style="normal" font-family="'Liberation Sans',sans-serif" textLength="24.99" lengthAdjust="spacingAndGlyphs" stroke="#484848" stroke-width="0.08">End Arrow</text><text x="138.75" y="136" font-size="5.96" fill="#333" font-weight="normal" font-style="normal" font-family="'Liberation Sans',sans-serif" textLength="34.93" lengthAdjust="spacingAndGlyphs" stroke="#333" stroke-width="0.08">Filled 90 arrow</text><text x="60.00" y="145" font-size="5.96" fill="#484848" font-weight="normal" font-style="normal" font-family="'Liberation Sans',sans-serif" textLength="37.03" lengthAdjust="spacingAndGlyphs" stroke="#484848" stroke-width="0.08">End Arrow Size</text><text x="138.75" y="145" font-size="5.96" fill="#333" font-weight="normal" font-style="normal" font-family="'Liberation Sans',sans-serif" textLength="7.41" lengthAdjust="spacingAndGlyphs" stroke="#333" stroke-width="0.08">7,7</text><text x="60.00" y="154" font-size="5.96" fill="#484848" font-weight="normal" font-style="normal" font-family="'Liberation Sans',sans-serif" textLength="55.60" lengthAdjust="spacingAndGlyphs" stroke="#484848" stroke-width="0.08">End Label Arrow Offset</text><text x="138.75" y="154" font-size="5.96" fill="#333" font-weight="normal" font-style="normal" font-family="'Liberation Sans',sans-serif" textLength="5.93" lengthAdjust="spacingAndGlyphs" stroke="#333" stroke-width="0.08">12</text><text x="60.00" y="162" font-size="5.96" fill="#484848" font-weight="normal" font-style="normal" font-family="'Liberation Sans',sans-serif" textLength="66.74" lengthAdjust="spacingAndGlyphs" stroke="#484848" stroke-width="0.08">End Label Connector Offset</text><text x="138.75" y="162" font-size="5.96" fill="#333" font-weight="normal" font-style="normal" font-family="'Liberation Sans',sans-serif" textLength="2.96" lengthAdjust="spacingAndGlyphs" stroke="#333" stroke-width="0.08">2</text><text x="60.00" y="171" font-size="5.96" fill="#484848" font-weight="normal" font-style="normal" font-family="'Liberation Sans',sans-serif" textLength="26.79" lengthAdjust="spacingAndGlyphs" stroke="#484848" stroke-width="0.08">Start Arrow</text><text x="138.75" y="171" font-size="5.96" fill="#333" font-weight="normal" font-style="normal" font-family="'Liberation Sans',sans-serif" textLength="15.40" lengthAdjust="spacingAndGlyphs" stroke="#333" stroke-width="0.08">(none)</text><text x="60.00" y="180" font-size="5.96" fill="#484848" font-weight="normal" font-style="normal" font-family="'Liberation Sans',sans-serif" textLength="38.83" lengthAdjust="spacingAndGlyphs" stroke="#484848" stroke-width="0.08">Start Arrow Size</text><text x="138.75" y="180" font-size="5.96" fill="#333" font-weight="normal" font-style="normal" font-family="'Liberation Sans',sans-serif" textLength="7.41" lengthAdjust="spacingAndGlyphs" stroke="#333" stroke-width="0.08">7,7</text><text x="60.00" y="189" font-size="5.96" fill="#484848" font-weight="normal" font-style="normal" font-family="'Liberation Sans',sans-serif" textLength="57.40" lengthAdjust="spacingAndGlyphs" stroke="#484848" stroke-width="0.08">Start Label Arrow Offset</text><text x="138.75" y="189" font-size="5.96" fill="#333" font-weight="normal" font-style="normal" font-family="'Liberation Sans',sans-serif" textLength="5.93" lengthAdjust="spacingAndGlyphs" stroke="#333" stroke-width="0.08">12</text><text x="60.00" y="197" font-size="5.96" fill="#484848" font-weight="normal" font-style="normal" font-family="'Liberation Sans',sans-serif" textLength="68.54" lengthAdjust="spacingAndGlyphs" stroke="#484848" stroke-width="0.08">Start Label Connector Offset</text><text x="138.75" y="197" font-size="5.96" fill="#333" font-weight="normal" font-style="normal" font-family="'Liberation Sans',sans-serif" textLength="2.96" lengthAdjust="spacingAndGlyphs" stroke="#333" stroke-width="0.08">2</text><text x="60.00" y="206" font-size="5.96" fill="#484848" font-weight="normal" font-style="normal" font-family="'Liberation Sans',sans-serif" textLength="29.20" lengthAdjust="spacingAndGlyphs" stroke="#484848" stroke-width="0.08">Stroke Style</text><text x="60.00" y="215" font-size="5.96" fill="#484848" font-weight="normal" font-style="normal" font-family="'Liberation Sans',sans-serif" textLength="41.44" lengthAdjust="spacingAndGlyphs" stroke="#484848" stroke-width="0.08">Stroke Thickness</text><text x="138.75" y="215" font-size="6.10" fill="#333" font-weight="bold" font-style="normal" font-family="'Liberation Sans',sans-serif" textLength="3.26" lengthAdjust="spacingAndGlyphs" stroke="#333" stroke-width="0.08">2</text><text x="50.20" y="224" font-size="6.10" fill="#333" font-weight="bold" font-style="normal" font-family="'Liberation Sans',sans-serif" textLength="25.43" lengthAdjust="spacingAndGlyphs" stroke="#333" stroke-width="0.08">Common</text><text x="60.00" y="233" font-size="5.96" fill="#484848" font-weight="normal" font-style="normal" font-family="'Liberation Sans',sans-serif" textLength="34.93" lengthAdjust="spacingAndGlyphs" stroke="#484848" stroke-width="0.08">End Left Label</text><text x="60.00" y="242" font-size="5.96" fill="#484848" font-weight="normal" font-style="normal" font-family="'Liberation Sans',sans-serif" textLength="38.54" lengthAdjust="spacingAndGlyphs" stroke="#484848" stroke-width="0.08">End Right Label</text><text x="60.00" y="250" font-size="5.96" fill="#484848" font-weight="normal" font-style="normal" font-family="'Liberation Sans',sans-serif" textLength="36.73" lengthAdjust="spacingAndGlyphs" stroke="#484848" stroke-width="0.08">Start Left Label</text><text x="60.00" y="259" font-size="5.96" fill="#484848" font-weight="normal" font-style="normal" font-family="'Liberation Sans',sans-serif" textLength="40.34" lengthAdjust="spacingAndGlyphs" stroke="#484848" stroke-width="0.08">Start Right Label</text><text x="60.00" y="267" font-size="5.96" fill="#484848" font-weight="normal" font-style="normal" font-family="'Liberation Sans',sans-serif" textLength="9.93" lengthAdjust="spacingAndGlyphs" stroke="#484848" stroke-width="0.08">Text</text><text x="50.20" y="276" font-size="6.10" fill="#333" font-weight="bold" font-style="normal" font-family="'Liberation Sans',sans-serif" textLength="19.24" lengthAdjust="spacingAndGlyphs" stroke="#333" stroke-width="0.08">Layout</text><text x="60.00" y="286" font-size="5.96" fill="#484848" font-weight="normal" font-style="normal" font-family="'Liberation Sans',sans-serif" textLength="11.74" lengthAdjust="spacingAndGlyphs" stroke="#484848" stroke-width="0.08">Type</text><text x="138.75" y="286" font-size="6.10" fill="#333" font-weight="bold" font-style="normal" font-family="'Liberation Sans',sans-serif" textLength="20.22" lengthAdjust="spacingAndGlyphs" stroke="#333" stroke-width="0.08">Curved</text><text x="50.20" y="295" font-size="6.10" fill="#333" font-weight="bold" font-style="normal" font-family="'Liberation Sans',sans-serif" textLength="42.39" lengthAdjust="spacingAndGlyphs" stroke="#333" stroke-width="0.08">Size &amp; Position</text><text x="60.00" y="304" font-size="5.96" fill="#484848" font-weight="normal" font-style="normal" font-family="'Liberation Sans',sans-serif" textLength="14.75" lengthAdjust="spacingAndGlyphs" stroke="#484848" stroke-width="0.08">End X</text><text x="138.75" y="304" font-size="6.10" fill="#333" font-weight="bold" font-style="normal" font-family="'Liberation Sans',sans-serif" textLength="11.75" lengthAdjust="spacingAndGlyphs" stroke="#333" stroke-width="0.08">-661</text><text x="60.00" y="313" font-size="5.96" fill="#484848" font-weight="normal" font-style="normal" font-family="'Liberation Sans',sans-serif" textLength="14.66" lengthAdjust="spacingAndGlyphs" stroke="#484848" stroke-width="0.08">End Y</text><text x="138.75" y="313" font-size="6.10" fill="#333" font-weight="bold" font-style="normal" font-family="'Liberation Sans',sans-serif" textLength="11.75" lengthAdjust="spacingAndGlyphs" stroke="#333" stroke-width="0.08">-393</text><text x="60.00" y="321" font-size="5.96" fill="#484848" font-weight="normal" font-style="normal" font-family="'Liberation Sans',sans-serif" textLength="16.55" lengthAdjust="spacingAndGlyphs" stroke="#484848" stroke-width="0.08">Start X</text><text x="138.75" y="321" font-size="6.10" fill="#333" font-weight="bold" font-style="normal" font-family="'Liberation Sans',sans-serif" textLength="11.75" lengthAdjust="spacingAndGlyphs" stroke="#333" stroke-width="0.08">-500</text><text x="60.00" y="330" font-size="5.96" fill="#484848" font-weight="normal" font-style="normal" font-family="'Liberation Sans',sans-serif" textLength="16.46" lengthAdjust="spacingAndGlyphs" stroke="#484848" stroke-width="0.08">Start Y</text><text x="138.75" y="330" font-size="6.10" fill="#333" font-weight="bold" font-style="normal" font-family="'Liberation Sans',sans-serif" textLength="16.64" lengthAdjust="spacingAndGlyphs" stroke="#333" stroke-width="0.08">-187.5</text><text x="60.80" y="62" font-size="8.72" fill="#3a3a3a" font-weight="bold" font-style="normal" font-family="'Liberation Sans',sans-serif" textLength="5.00" lengthAdjust="spacingAndGlyphs" stroke="#3a3a3a" stroke-width="0.08">B</text><text x="72.44" y="62" font-size="8.72" fill="#3a3a3a" font-weight="normal" font-style="italic" font-family="'Liberation Serif',serif" textLength="3.36" lengthAdjust="spacingAndGlyphs" stroke="#3a3a3a" stroke-width="0.08">I</text><text x="84.40" y="62" font-size="8.72" fill="#3a3a3a" font-weight="bold" font-style="normal" font-family="'Liberation Sans',sans-serif" textLength="4.80" lengthAdjust="spacingAndGlyphs" stroke="#3a3a3a" stroke-width="0.08">U</text><text x="97.20" y="62" font-size="8.72" fill="#3a3a3a" font-weight="bold" font-style="normal" font-family="'Liberation Sans',sans-serif" textLength="4.40" lengthAdjust="spacingAndGlyphs" stroke="#3a3a3a" stroke-width="0.08">S</text><text x="108.20" y="62" font-size="8.72" fill="#3a3a3a" font-weight="bold" font-style="normal" font-family="'Liberation Sans',sans-serif" textLength="5.20" lengthAdjust="spacingAndGlyphs" stroke="#3a3a3a" stroke-width="0.08">A</text><text x="294.80" y="135" font-size="13.81" fill="#5a5289" font-weight="normal" font-style="normal" font-family="'Liberation Sans',sans-serif" textLength="114.19" lengthAdjust="spacingAndGlyphs" stroke="#5a5289" stroke-width="0.1">Root Children Count</text><text x="301.30" y="238" font-size="14.24" fill="#5a5289" font-weight="normal" font-style="normal" font-family="'Liberation Sans',sans-serif" textLength="101.70" lengthAdjust="spacingAndGlyphs" stroke="#5a5289" stroke-width="0.1">Tree Nodes Count</text><text x="329.70" y="341" font-size="14.24" fill="#5a5289" font-weight="normal" font-style="normal" font-family="'Liberation Sans',sans-serif" textLength="45.11" lengthAdjust="spacingAndGlyphs" stroke="#5a5289" stroke-width="0.1">Breadth</text><text x="333.00" y="444" font-size="13.95" fill="#5a5289" font-weight="normal" font-style="normal" font-family="'Liberation Sans',sans-serif" textLength="39.00" lengthAdjust="spacingAndGlyphs" stroke="#5a5289" stroke-width="0.1">Square</text><text x="568.00" y="291" font-size="17.73" fill="#ffffff" font-weight="normal" font-style="normal" font-family="'Liberation Sans',sans-serif" textLength="76.31" lengthAdjust="spacingAndGlyphs" stroke="#ffffff" stroke-width="0.1">Automatic</text><text x="676.30" y="468" font-size="6.10" fill="#ffffff" font-weight="normal" font-style="normal" font-family="'Liberation Sans',sans-serif" textLength="15.70" lengthAdjust="spacingAndGlyphs" stroke="#ffffff" stroke-width="0.08">150 %</text></svg>
</body></html>
